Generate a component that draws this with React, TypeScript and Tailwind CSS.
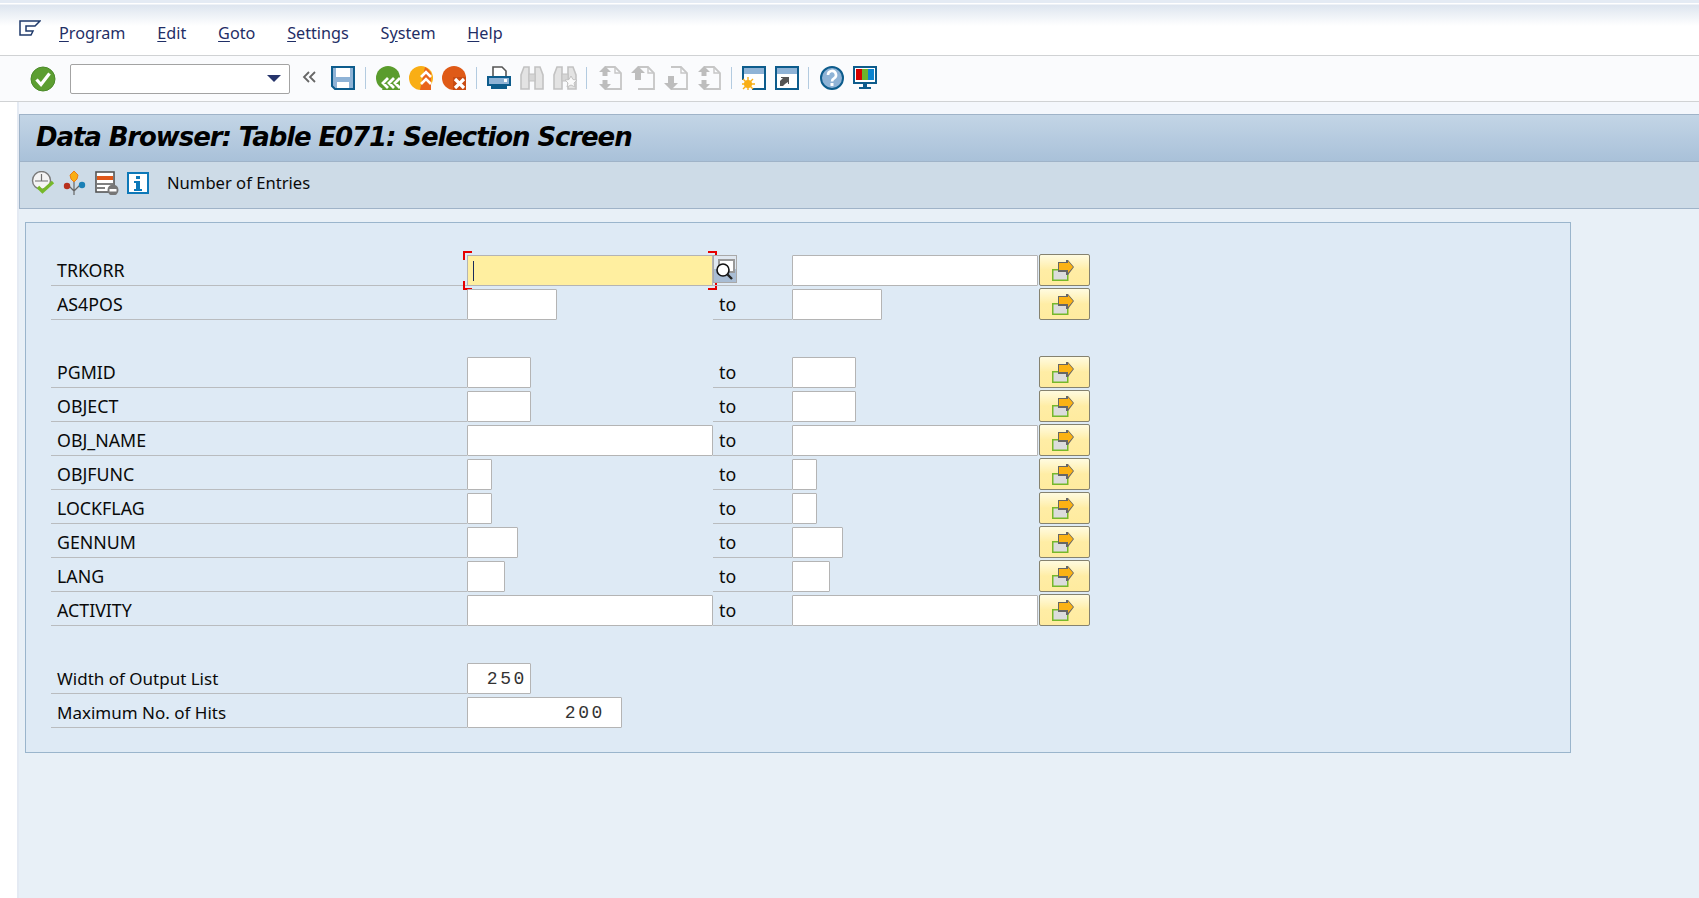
import React from "react";

const Svg = ({ children, w = 24, h = 24, className = "" }: { children: React.ReactNode; w?: number; h?: number; className?: string }) => (
  <svg width={w} height={h} viewBox={`0 0 ${w} ${h}`} className={"shrink-0 " + className}>{children}</svg>
);

const Check = () => (
  <Svg w={26} h={26}>
    <circle cx="13" cy="13" r="12" fill="#5c9e31" stroke="#4b8a2a" strokeWidth="1" />
    <path d="M6.5 13.5l4.5 5 8.5-11" fill="none" stroke="#fff" strokeWidth="3.2" />
  </Svg>
);
const Save = () => (
  <Svg>
    <path d="M1 1h22v22H4l-3-3z" fill="#8fb3d6" stroke="#0d5c8c" strokeWidth="2" />
    <rect x="5" y="2" width="14" height="9" fill="#fff" />
    <rect x="6" y="16" width="12" height="6" fill="#fff" />
  </Svg>
);
const Back = () => (
  <Svg>
    <circle cx="12" cy="12" r="12" fill="#5a9c2d" />
    <path d="M12 12h12v12H6z" fill="#5a9c2d" />
    <path d="M12 12l-5 5 5 5M18 12l-5 5 5 5M24 12l-5 5 5 5" fill="none" stroke="#fff" strokeWidth="2.8" />
  </Svg>
);
const Exit = () => (
  <Svg>
    <circle cx="12" cy="12" r="12" fill="#f9ae15" />
    <path d="M16 1a12 12 0 0 1 6 6v17h-11z" fill="#e9641c" />
    <path d="M12 11l5-5 5 5M12 18l5-5 5 5" fill="none" stroke="#fff" strokeWidth="2.6" />
  </Svg>
);
const Cancel = () => (
  <Svg>
    <circle cx="12" cy="12" r="12" fill="#df5a17" />
    <path d="M11 11h13v13H11z" fill="#c94b12" />
    <path d="M13 13l9 9M22 13l-9 9" stroke="#fff" strokeWidth="3.2" />
  </Svg>
);
const Print = () => (
  <Svg>
    <path d="M6 12V1h9l4 4v7" fill="#fff" stroke="#555" strokeWidth="1.6" />
    <rect x="1" y="11" width="22" height="8" fill="#8fb3d6" stroke="#0d5c8c" strokeWidth="2" />
    <rect x="17" y="13" width="3" height="3" fill="#fff" />
    <rect x="4" y="20" width="16" height="3" fill="#0d5c8c" />
  </Svg>
);
const Binoc = ({ star }: { star?: boolean }) => (
  <Svg>
    <path d="M1 23V9l3-8h5v22zM15 23V1h5l3 8v14z" fill="#e3e3e3" stroke="#c2c2c2" strokeWidth="1.6" />
    <rect x="9" y="8" width="6" height="7" fill="#d6d6d6" stroke="#c2c2c2" />
    {star && <path d="M18 10l2 3.5 4 .5-3 3 1 4-4-2-4 2 1-4-3-3 4-.5z" fill="#fafafa" stroke="#c2c2c2" />}
  </Svg>
);
const Page = ({ up, down, both }: { up?: boolean; down?: boolean; both?: boolean }) => (
  <Svg>
    <path d="M7 1h10l6 6v16H7" fill="none" stroke="#c6c6c6" strokeWidth="1.8" />
    <path d="M17 1v6h6" fill="none" stroke="#c6c6c6" strokeWidth="1.4" />
    {both && <path d="M7 0l6 6h-3.5v4h-5V6H1z" fill="#bdbdbd" />}
    {both && <path d="M7 24l6-6h-3.5v-4h-5v4H1z" fill="#bdbdbd" />}
    {up && <path d="M7 0l7 7h-4v7H4V7H0z" fill="#bdbdbd" />}
    {down && <path d="M7 24l7-7h-4v-7H4v7H0z" fill="#bdbdbd" />}
  </Svg>
);
const WinNew = () => (
  <Svg>
    <path d="M1 14V1h22v22H10" fill="#fff" stroke="#0d5c8c" strokeWidth="2" />
    <rect x="2" y="2" width="20" height="6" fill="#8fb3d6" />
    <circle cx="6" cy="18" r="4" fill="#f9ae15" />
    <path d="M6 11v14M-1 18h14M1 13l10 10M11 13L1 23" stroke="#f9ae15" strokeWidth="1.4" />
  </Svg>
);
const WinLink = () => (
  <Svg>
    <rect x="1" y="1" width="22" height="22" fill="#fff" stroke="#0d5c8c" strokeWidth="2" />
    <rect x="2" y="2" width="20" height="6" fill="#8fb3d6" />
    <path d="M5 20v-5l3-3h-2v-1h8v7h-1v-2l-3 2-2 2z" fill="#555" />
  </Svg>
);
const Help = () => (
  <Svg>
    <circle cx="12" cy="12" r="11" fill="#8fb3d6" stroke="#0d5c8c" strokeWidth="2" />
    <path d="M8 9a4 4 0 1 1 6 3.4c-1.4.8-2 1.4-2 3.1" fill="none" stroke="#fff" strokeWidth="2.6" />
    <rect x="10.5" y="17" width="3" height="3" fill="#fff" />
  </Svg>
);
const Monitor = () => (
  <Svg>
    <rect x="1" y="1" width="22" height="16" fill="#fff" stroke="#0d5c8c" strokeWidth="2" />
    <rect x="3" y="3" width="6" height="11" fill="#d40000" />
    <rect x="9" y="3" width="6" height="11" fill="#6db22c" />
    <rect x="15" y="3" width="6" height="11" fill="#0a84d0" />
    <rect x="10" y="18" width="4" height="3" fill="#0d5c8c" />
    <rect x="6" y="21" width="12" height="2" fill="#0d5c8c" />
  </Svg>
);
const Sep = () => <div className="w-px h-[22px] bg-[#b3cbe0] shrink-0" />;

const Execute = () => (
  <Svg>
    <circle cx="10.5" cy="9.5" r="9" fill="#f4f4f4" stroke="#7a7a7a" strokeWidth="1.4" />
    <path d="M10.5 3v7M4 10h13" stroke="#6f6f6f" strokeWidth="1.2" />
    <path d="M7 16l4.5 4.5L22 11" fill="none" stroke="#76b82a" strokeWidth="3.4" />
  </Svg>
);
const Dyn = () => (
  <Svg>
    <path d="M11 10v14M11 20L4 13M11 20l7-7" stroke="#666" strokeWidth="1.2" fill="none" />
    <path d="M11 0l4 4-1 4-3 3-3-3-1-4z" fill="#f9ae15" stroke="#e97d1c" />
    <circle cx="4" cy="15" r="3.2" fill="#b7301d" />
    <circle cx="19" cy="14" r="3.2" fill="#1a80b6" />
  </Svg>
);
const Sel = () => (
  <Svg>
    <rect x="1" y="1" width="18" height="20" fill="#fff" stroke="#555" strokeWidth="1.6" />
    <rect x="2" y="5" width="16" height="4" fill="#e0581a" />
    <path d="M2 13h16M2 17h8" stroke="#555" strokeWidth="1.4" />
    <circle cx="18" cy="19" r="5.5" fill="#777" />
    <rect x="14.5" y="18" width="7" height="2.5" fill="#fff" />
  </Svg>
);
const Info = () => (
  <Svg w={22} h={22}>
    <rect x="1" y="1" width="20" height="20" fill="#fff" stroke="#0d78b8" strokeWidth="2" />
    <rect x="9" y="4" width="4" height="3" fill="#0d78b8" />
    <path d="M7 9h6v8h2v2H7v-2h2v-6H7z" fill="#0d78b8" />
  </Svg>
);
const Multi = () => (
  <Svg w={22} h={21} className="mr-[3px]">
    <rect x="0.75" y="9.75" width="15" height="10.5" fill="#dcdcdc" stroke="#76b82a" strokeWidth="1.5" />
    <path d="M6 2h8V0h2l6 7-6 8h-2v-3H6z" fill="#666" />
    <path d="M7 3h9V1l5 6-5 6v-3H7z" fill="#fbb214" />
  </Svg>
);
const Lens = () => (
  <Svg w={24} h={28}>
    <rect x="0.5" y="0.5" width="23" height="27" fill="#dfe7f0" stroke="#a9a9a9" />
    <rect x="1" y="14" width="22" height="13" fill="#a9bdd4" />
    <rect x="6" y="5" width="15" height="12" fill="#fff" stroke="#999" strokeWidth="2" />
    <circle cx="10" cy="15" r="6" fill="#fff" stroke="#111" strokeWidth="1.6" />
    <path d="M14 19l5 5" stroke="#222" strokeWidth="2.4" />
  </Svg>
);

const Field = ({ w, value, pr = 0 }: { w: number; value?: string; pr?: number }) => (
  <div style={{ width: w, paddingRight: pr }} className="h-[31px] shrink-0 bg-white border border-[#b4b4b4] rounded-[1px] flex items-center justify-end pt-[1px] font-['Liberation_Mono',monospace] text-[18px] tracking-[2.6px] text-[#333]">
    {value}
  </div>
);

const RowBtn = () => (
  <button className="w-[51px] h-[32px] shrink-0 rounded-[2px] border border-[#85826f] bg-gradient-to-b from-[#fffbe0] via-[#ffeda5] to-[#ffeb9f] flex items-center justify-center">
    <Multi />
  </button>
);

const rows: { label: string; w: number; to?: boolean; first?: boolean; gapBefore?: boolean }[] = [
  { label: "TRKORR", w: 246, first: true },
  { label: "AS4POS", w: 90, to: true },
  { label: "PGMID", w: 64, to: true, gapBefore: true },
  { label: "OBJECT", w: 64, to: true },
  { label: "OBJ_NAME", w: 246, to: true },
  { label: "OBJFUNC", w: 25, to: true },
  { label: "LOCKFLAG", w: 25, to: true },
  { label: "GENNUM", w: 51, to: true },
  { label: "LANG", w: 38, to: true },
  { label: "ACTIVITY", w: 246, to: true },
];

const labelCls = "w-[416px] h-full shrink-0 border-b border-[#b9bcbf] pl-[6px] flex items-center pt-[3px]";
const labelLowCls = "w-[416px] h-full shrink-0 border-b border-[#b9bcbf] pl-[6px] flex items-center pt-[4px]";

const Row = ({ r }: { r: (typeof rows)[number] }) => (
  <div className={"flex h-[34px] items-end text-[17.8px] " + (r.gapBefore ? "mt-[34px]" : "")}>
    <div className={labelCls}>{r.label}</div>
    <div className="w-[246px] shrink-0 relative flex items-end">
      {r.first ? (
        <>
          <div className="w-[246px] h-[31px] bg-[#ffefa0] border border-[#b4b4b4] flex items-center pl-[5px]">
            <div className="w-px h-[20px] bg-[#1a2a5a]" />
          </div>
          <i className="absolute left-[-4px] bottom-[-4px] w-[9px] h-[9px] border-l-2 border-b-2 border-[#e60000]" />
          <i className="absolute right-[-4px] bottom-[-4px] w-[9px] h-[9px] border-r-2 border-b-2 border-[#e60000]" />
          <i className="absolute left-[-4px] bottom-[26px] w-[9px] h-[9px] border-l-2 border-t-2 border-[#e60000]" />
          <i className="absolute right-[-4px] bottom-[26px] w-[9px] h-[9px] border-r-2 border-t-2 border-[#e60000]" />
        </>
      ) : (
        <Field w={r.w} />
      )}
    </div>
    <div className="w-[79px] h-full shrink-0 border-b border-[#b9bcbf] pl-[6px] flex items-center pt-[3px] relative">
      {r.to ? "to" : <div className="absolute left-0 top-[3px] z-10"><Lens /></div>}
    </div>
    <div className="w-[247px] shrink-0 flex items-end"><Field w={r.w} /></div>
    <RowBtn />
  </div>
);

const Menu = ({ k, rest }: { k: string; rest: string }) => (
  <span><u className="underline-offset-2">{k}</u>{rest}</span>
);

export default function App() {
  return (
    <div className="h-screen w-full overflow-hidden flex flex-col bg-[#f4f7fc] text-black font-['Noto_Sans','Open_Sans',sans-serif]">
      <div className="h-[56px] shrink-0 border-b border-[#d0d2d4] bg-[linear-gradient(to_bottom,#e4ebf4_0,#e4ebf4_3px,#fff_3px,#fff_4px,#dde5ef_5px,#fff_26px)] flex">
        <div className="pl-[19px] pt-[20px]">
          <Svg w={22} h={16}>
            <path d="M1 1h20l-5 5H7v5h7l-2 4H1z" fill="none" stroke="#1f3a6b" strokeWidth="1.5" />
          </Svg>
        </div>
        <div className="flex gap-[31.8px] pl-[18px] pt-[21px] text-[16.2px] leading-[24px] text-[#1f2e66]">
          <Menu k="P" rest="rogram" />
          <Menu k="E" rest="dit" />
          <Menu k="G" rest="oto" />
          <Menu k="S" rest="ettings" />
          <span>S<u className="underline-offset-2">y</u>stem</span>
          <Menu k="H" rest="elp" />
        </div>
      </div>
      <div className="h-[46px] shrink-0 border-b border-[#d0d2d4] bg-[#fafbfd] flex items-center pl-[30px]">
        <Check />
        <div className="ml-[14px] w-[220px] h-[30px] border border-[#a3a3a3] rounded-[2px] bg-white flex items-center justify-end pr-[8px]">
          <div className="w-0 h-0 border-l-[7px] border-r-[7px] border-t-[7px] border-l-transparent border-r-transparent border-t-[#26346b]" />
        </div>
        <div className="ml-[12px] w-[29px] mb-[3px]">
          <Svg w={14} h={12}>
            <path d="M7 1L2 6l5 5M13 1L8 6l5 5" fill="none" stroke="#666" strokeWidth="1.8" />
          </Svg>
        </div>
        <div className="mb-[2px] flex items-center">
          <Save />
          <div className="ml-[10px]"><Sep /></div>
          <div className="flex items-center gap-[9px] ml-[10px]">
            <Back /><Exit /><Cancel />
          </div>
          <div className="ml-[10px]"><Sep /></div>
          <div className="flex items-center gap-[9px] ml-[10px]">
            <Print /><Binoc /><Binoc star />
          </div>
          <div className="ml-[9px]"><Sep /></div>
          <div className="flex items-center gap-[9px] ml-[11px]">
            <Page both /><Page up /><Page down /><Page both />
          </div>
          <div className="ml-[10px]"><Sep /></div>
          <div className="flex items-center gap-[9px] ml-[10px]">
            <WinNew /><WinLink />
          </div>
          <div className="ml-[9px]"><Sep /></div>
          <div className="flex items-center gap-[9px] ml-[11px]">
            <Help /><Monitor />
          </div>
        </div>
      </div>
      <div className="flex-1 flex min-h-0">
        <div className="w-[19px] shrink-0 bg-white border-r-2 border-[#e4eaf3]" />
        <div className="flex-1 flex flex-col pt-[12px] min-w-0">
          <div className="h-[47px] shrink-0 border-t border-l border-[#9fb3c8] bg-gradient-to-b from-[#c3d5e6] to-[#a9c1d9] flex items-center pl-[16px] pb-[2px] font-['DejaVu_Sans',sans-serif] font-bold italic text-[26px] tracking-[-1.1px] whitespace-nowrap">
            Data Browser: Table E071: Selection Screen
          </div>
          <div className="h-[48px] shrink-0 border-t border-l border-b border-[#9fb3c8] bg-[#cddbe7] flex items-center pl-[11px] pb-[4px] gap-[8px]">
            <Execute /><Dyn /><Sel /><Info />
            <span className="ml-[10px] text-[16.6px] text-[#0a0a0a]">Number of Entries</span>
          </div>
          <div className="flex-1 bg-[#e8f0f7] pl-[6px] pt-[13px]">
            <div className="w-[1546px] h-[531px] border border-[#9ab5cc] bg-[#deeaf5] pl-[25px] pt-[29px] text-[#0a0a0a]">
              {rows.map((r) => <Row key={r.label} r={r} />)}
              <div className="flex h-[34px] items-end mt-[34px] text-[17px]">
                <div className={labelLowCls}>Width of Output List</div>
                <Field w={64} value="250" pr={3} />
              </div>
              <div className="flex h-[34px] items-end text-[17px]">
                <div className={labelLowCls}>Maximum No. of Hits</div>
                <Field w={155} value="200" pr={16} />
              </div>
            </div>
          </div>
        </div>
      </div>
    </div>
  );
}
